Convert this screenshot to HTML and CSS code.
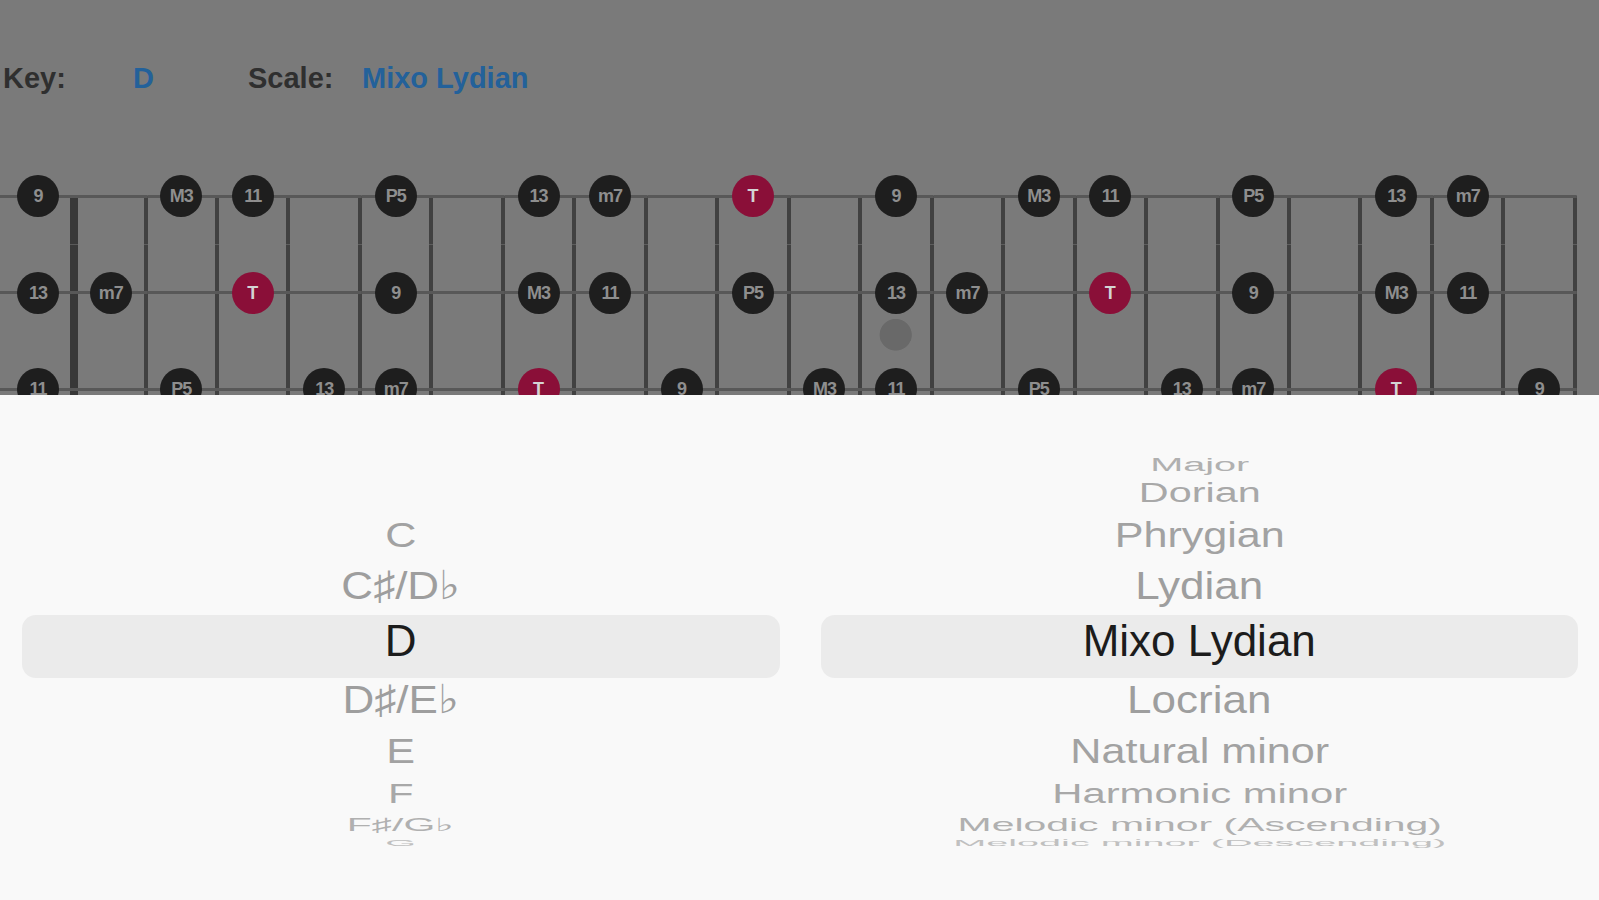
FILE: index.html
```html
<!DOCTYPE html>
<html lang="en">
<head>
  <meta charset="UTF-8">
  <title>Scale Finder</title>
  <link rel="stylesheet" href="styles.css">
</head>
<body>
  <div class="top">
    <div class="header">
      <span class="label key-label">Key:</span>
      <span class="value key-value">D</span>
      <span class="label scale-label">Scale:</span>
      <span class="value">Mixo Lydian</span>
    </div>

    <div class="board">
      <!-- high E -->
      <div class="string first-string">
        <div class="cell open"><span class="note">9</span></div>
        <div class="cell nut"></div>
        <div class="cell"><span class="note">M3</span></div>
        <div class="cell"><span class="note">11</span></div>
        <div class="cell"></div>
        <div class="cell"><span class="note">P5</span></div>
        <div class="cell"></div>
        <div class="cell"><span class="note">13</span></div>
        <div class="cell"><span class="note">m7</span></div>
        <div class="cell"></div>
        <div class="cell"><span class="note root">T</span></div>
        <div class="cell"></div>
        <div class="cell"><span class="note">9</span></div>
        <div class="cell"></div>
        <div class="cell"><span class="note">M3</span></div>
        <div class="cell"><span class="note">11</span></div>
        <div class="cell"></div>
        <div class="cell"><span class="note">P5</span></div>
        <div class="cell"></div>
        <div class="cell"><span class="note">13</span></div>
        <div class="cell"><span class="note">m7</span></div>
        <div class="cell"></div>
      </div>
      <!-- B -->
      <div class="string">
        <div class="cell open"><span class="note">13</span></div>
        <div class="cell nut"><span class="note">m7</span></div>
        <div class="cell"></div>
        <div class="cell"><span class="note root">T</span></div>
        <div class="cell"></div>
        <div class="cell"><span class="note">9</span></div>
        <div class="cell"></div>
        <div class="cell"><span class="note">M3</span></div>
        <div class="cell"><span class="note">11</span></div>
        <div class="cell"></div>
        <div class="cell"><span class="note">P5</span></div>
        <div class="cell"></div>
        <div class="cell inlay-top"><span class="note">13</span></div>
        <div class="cell"><span class="note">m7</span></div>
        <div class="cell"></div>
        <div class="cell"><span class="note root">T</span></div>
        <div class="cell"></div>
        <div class="cell"><span class="note">9</span></div>
        <div class="cell"></div>
        <div class="cell"><span class="note">M3</span></div>
        <div class="cell"><span class="note">11</span></div>
        <div class="cell"></div>
      </div>
      <!-- G -->
      <div class="string">
        <div class="cell open"><span class="note">11</span></div>
        <div class="cell nut"></div>
        <div class="cell"><span class="note">P5</span></div>
        <div class="cell"></div>
        <div class="cell"><span class="note">13</span></div>
        <div class="cell"><span class="note">m7</span></div>
        <div class="cell"></div>
        <div class="cell"><span class="note root">T</span></div>
        <div class="cell"></div>
        <div class="cell"><span class="note">9</span></div>
        <div class="cell"></div>
        <div class="cell"><span class="note">M3</span></div>
        <div class="cell inlay-bottom"><span class="note">11</span></div>
        <div class="cell"></div>
        <div class="cell"><span class="note">P5</span></div>
        <div class="cell"></div>
        <div class="cell"><span class="note">13</span></div>
        <div class="cell"><span class="note">m7</span></div>
        <div class="cell"></div>
        <div class="cell"><span class="note root">T</span></div>
        <div class="cell"></div>
        <div class="cell"><span class="note">9</span></div>
      </div>
    </div>
  </div>

  <div class="picker">
    <div class="wheel">
      <div class="item u2">C</div>
      <div class="item u1">C♯/D♭</div>
      <div class="item sel">D</div>
      <div class="item d1">D♯/E♭</div>
      <div class="item d2">E</div>
      <div class="item d3">F</div>
      <div class="item d4">F♯/G♭</div>
      <div class="item d5">G</div>
    </div>
    <div class="wheel">
      <div class="item u4">Major</div>
      <div class="item u3">Dorian</div>
      <div class="item u2">Phrygian</div>
      <div class="item u1">Lydian</div>
      <div class="item sel">Mixo Lydian</div>
      <div class="item d1">Locrian</div>
      <div class="item d2">Natural minor</div>
      <div class="item d3">Harmonic minor</div>
      <div class="item d4">Melodic minor (Ascending)</div>
      <div class="item d5">Melodic minor (Descending)</div>
    </div>
  </div>
</body>
</html>
```

FILE: styles.css
```css
body { margin: 0; font-family: "Liberation Sans", Arial, sans-serif; background: #f9f9f9; }

.top { height: 395px; background: #7a7a7a; overflow: hidden; }

.header { display: flex; height: 36px; padding: 60px 0 0 3px; line-height: 36px; font-size: 29px; font-weight: bold; }
.label { color: #2f2f2f; }
.value { color: #23619a; }
.key-label { width: 130px; }
.key-value { width: 115px; }
.scale-label { width: 114px; }

/* fretboard */
.board { margin-top: 52px; }
.string { display: flex; height: 96.5px; }
.cell {
  flex: none; display: flex; align-items: center; justify-content: center;
  width: 71.48px; padding-right: 4px; box-sizing: border-box;
  background:
    linear-gradient(#585858, #585858) center / 100% 3px no-repeat,
    linear-gradient(#414141, #414141) right / 4px 100% no-repeat;
}
.cell.open { width: 70px; padding: 0 0 0 6px; background: linear-gradient(#585858, #585858) center / 100% 3px no-repeat; }
.cell.nut {
  width: 77.5px; padding-left: 8px;
  background:
    linear-gradient(#585858, #585858) center / 100% 3px no-repeat,
    linear-gradient(#414141, #414141) right / 4px 100% no-repeat,
    linear-gradient(#383838, #383838) left / 8px 100% no-repeat;
}
.first-string .cell {
  background:
    linear-gradient(#585858, #585858) center / 100% 3px no-repeat,
    linear-gradient(#414141, #414141) right bottom / 4px 50% no-repeat;
}
.first-string .cell.open { background: linear-gradient(#585858, #585858) center / 100% 3px no-repeat; }
.first-string .cell.nut {
  background:
    linear-gradient(#585858, #585858) center / 100% 3px no-repeat,
    linear-gradient(#414141, #414141) right bottom / 4px 50% no-repeat,
    linear-gradient(#383838, #383838) left bottom / 8px 50% no-repeat;
}
.cell.inlay-top {
  background:
    linear-gradient(#585858, #585858) center / 100% 3px no-repeat,
    linear-gradient(#414141, #414141) right / 4px 100% no-repeat,
    radial-gradient(circle 16.5px at 33.7px 90px, #696969 95%, transparent 100%);
}
.cell.inlay-bottom {
  background:
    linear-gradient(#585858, #585858) center / 100% 3px no-repeat,
    linear-gradient(#414141, #414141) right / 4px 100% no-repeat,
    radial-gradient(circle 16.5px at 33.7px -6.5px, #696969 95%, transparent 100%);
}

.note {
  width: 42px; height: 42px; border-radius: 50%;
  background: #1e1e1e; color: #8e8e8e;
  font-size: 18px; font-weight: bold; line-height: 42px; text-align: center; letter-spacing: -1px;
}
.note.root { background: #8a0f38; color: #d4d4d4; letter-spacing: 0; }

/* picker wheels */
.picker { display: flex; gap: 41px; align-items: flex-end; height: 505px; box-sizing: border-box; padding: 0 21px 38px 22px; }
.wheel { flex: 1; display: flex; flex-direction: column; }
.item { display: flex; align-items: center; justify-content: center; font-size: 44px; line-height: 1; white-space: nowrap; color: #a0a0a0; }
.item.sel { height: 63px; padding-bottom: 11px; box-sizing: border-box; background: #ebebeb; border-radius: 14px; color: #1c1c1c; }
.u4 { height: 28px; transform: translateY(4px) scale(.9, .42); color: #b0b0b0; }
.u3 { height: 36px; transform: scale(.94, .62); color: #a8a8a8; }
.u2 { height: 48px; transform: scale(.98, .8); color: #a2a2a2; }
.u1 { height: 56px; transform: translateY(-1px) scaleY(.9); color: #9e9e9e; }
.d1 { height: 56px; transform: translateY(-6px) scaleY(.9); color: #9e9e9e; }
.d2 { height: 48px; transform: translateY(-7px) scale(.98, .8); color: #a2a2a2; }
.d3 { height: 38px; transform: translateY(-7px) scale(.95, .62); color: #a8a8a8; }
.d4 { height: 26px; transform: translateY(-8px) scale(.93, .42); color: #b0b0b0; }
.d5 { height: 16px; transform: translateY(-11px) scale(.9, .2); color: #c0c0c0; }
```
